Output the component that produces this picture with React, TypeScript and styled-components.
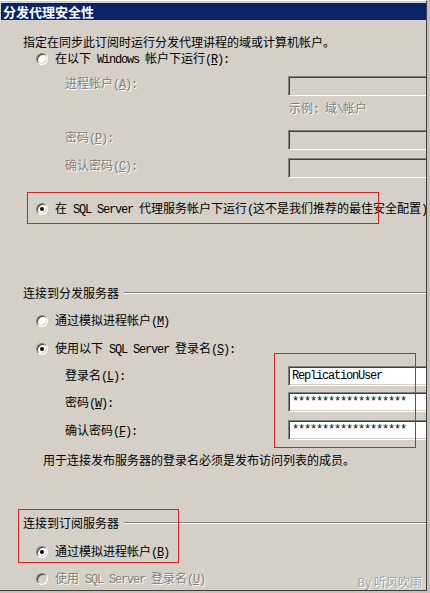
import styled, { createGlobalStyle } from 'styled-components';

const GlobalStyle = createGlobalStyle`
  html, body {
    margin: 0;
    padding: 0;
  }
  body {
    background: #c4c1ba;
    font-family: "Noto Sans CJK SC", "Noto Sans", sans-serif;
    font-size: 12px;
    color: #000;
  }
`;

const Dialog = styled.div`
  position: relative;
  width: 426px;
  height: 589px;
  background: #d4d0c8;
  border-top: 1px solid #ffffff;
  border-right: 1px solid #404040;
  border-bottom: 1px solid #404040;
  overflow: hidden;
`;

const TitleBar = styled.div`
  margin: 2px 0 0 1px;
  height: 17px;
  background: #0a246a;
  color: #fff;
  font-weight: bold;
  font-size: 13px;
  line-height: 17px;
  padding-left: 2px;
`;

const Row = styled.div<{ $mt: number; $h: number; $left: number }>`
  margin-top: ${p => p.$mt}px;
  height: ${p => p.$h}px;
  padding-left: ${p => p.$left}px;
  display: flex;
  align-items: center;
  white-space: nowrap;
  line-height: 14px;
`;

const Text = styled.span<{ $disabled?: boolean }>`
  color: ${p => (p.$disabled ? '#808080' : '#000')};
  text-shadow: ${p => (p.$disabled ? '1px 1px 0 #ffffff' : 'none')};
`;

const Mono = styled.span`
  font-family: "Liberation Mono", monospace;
  font-size: 12px;
  letter-spacing: -1.2px;
`;

const RadioDot = styled.span<{ $checked?: boolean; $disabled?: boolean }>`
  position: relative;
  box-sizing: border-box;
  width: 12px;
  height: 12px;
  margin-right: 7px;
  border-radius: 50%;
  border: 1px solid;
  border-color: #808080 #ffffff #ffffff #808080;
  box-shadow: inset 1px 1px 0 #404040, inset -1px -1px 0 #d4d0c8;
  background: ${p => (p.$disabled ? '#d4d0c8' : '#ffffff')};
  flex: none;

  &::after {
    content: '';
    display: ${p => (p.$checked ? 'block' : 'none')};
    position: absolute;
    left: 3px;
    top: 3px;
    width: 4px;
    height: 4px;
    border-radius: 50%;
    background: #000;
  }
`;

const FieldRow = styled.div<{ $mt: number; $labelTop: number }>`
  margin-top: ${p => p.$mt}px;
  height: 20px;
  display: grid;
  grid-template-columns: 223px 160px;
  padding-left: 65px;
  white-space: nowrap;

  & > span {
    padding-top: ${p => p.$labelTop}px;
    line-height: 14px;
  }
`;

const TextBox = styled.div<{ $disabled?: boolean }>`
  box-sizing: border-box;
  height: 20px;
  border: 1px solid;
  border-color: #808080 #ffffff #ffffff #808080;
  box-shadow: inset 1px 1px 0 #404040, inset -1px -1px 0 #d4d0c8;
  background: ${p => (p.$disabled ? '#d4d0c8' : '#ffffff')};
  padding: 0 3px;
  display: flex;
  align-items: center;
  font-family: "Liberation Mono", monospace;
  font-size: 12px;
  letter-spacing: -1.2px;
`;

const GroupLine = styled.div`
  flex: 1;
  height: 0;
  margin-left: 5px;
  border-top: 1px solid #808080;
  border-bottom: 1px solid #ffffff;
`;

const Callout = styled.div<{ $x: number; $y: number; $w: number; $h: number }>`
  position: absolute;
  left: ${p => p.$x}px;
  top: ${p => p.$y}px;
  width: ${p => p.$w}px;
  height: ${p => p.$h}px;
  box-sizing: border-box;
  border: 1px solid #d02626;
  pointer-events: none;
`;

const Watermark = styled.div`
  position: absolute;
  right: 4px;
  top: 574px;
  color: #a4a4a4;
  text-shadow: 1px 1px 0 #ffffff;
  font-size: 12px;
  line-height: 14px;
`;

type RadioProps = {
  mt: number;
  checked?: boolean;
  disabled?: boolean;
  children: React.ReactNode;
};

const Radio = ({ mt, checked, disabled, children }: RadioProps) => (
  <Row $mt={mt} $h={16} $left={36}>
    <RadioDot $checked={checked} $disabled={disabled} />
    <Text $disabled={disabled}>{children}</Text>
  </Row>
);

type FieldProps = {
  mt: number;
  labelTop: number;
  disabled?: boolean;
  label: React.ReactNode;
  value?: string;
};

const Field = ({ mt, labelTop, disabled, label, value }: FieldProps) => (
  <FieldRow $mt={mt} $labelTop={labelTop}>
    <Text $disabled={disabled}>{label}</Text>
    <TextBox $disabled={disabled}>{value}</TextBox>
  </FieldRow>
);

const Key = ({ k, colon }: { k: string; colon?: boolean }) => (
  <Mono>
    (<u>{k}</u>){colon ? ':' : ''}
  </Mono>
);

const stars = '*******************';

export default function App() {
  return (
    <>
      <GlobalStyle />
      <Dialog>
        <TitleBar>分发代理安全性</TitleBar>

        <Row $mt={14} $h={16} $left={23}>
          <Text>指定在同步此订阅时运行分发代理讲程的域或计算机帐户。</Text>
        </Row>
        <Radio mt={1}>
          在以下<Mono> Windows </Mono>帐户下运行<Key k="R" colon />
        </Radio>
        <Field mt={9} labelTop={0} disabled label={<>进程帐户<Key k="A" colon /></>} />
        <Row $mt={6} $h={14} $left={289}>
          <Text $disabled>
            示例<Mono>: </Mono>域<Mono>\</Mono>帐户
          </Text>
        </Row>
        <Field mt={14} labelTop={0} disabled label={<>密码<Key k="P" colon /></>} />
        <Field mt={8} labelTop={0} disabled label={<>确认密码<Key k="C" colon /></>} />
        <Radio mt={23} checked>
          在<Mono> SQL Server </Mono>代理服务帐户下运行<Mono>(</Mono>这不是我们推荐的最佳安全配置<Mono>)</Mono>
        </Radio>

        <Row $mt={68} $h={16} $left={23}>
          <Text>连接到分发服务器</Text>
          <GroupLine />
        </Row>
        <Radio mt={12}>
          通过模拟进程帐户<Key k="M" />
        </Radio>
        <Radio mt={12} checked>
          使用以下<Mono> SQL Server </Mono>登录名<Key k="S" colon />
        </Radio>
        <Field mt={9} labelTop={2} label={<>登录名<Key k="L" colon /></>} value="ReplicationUser" />
        <Field mt={6} labelTop={3} label={<>密码<Key k="W" colon /></>} value={stars} />
        <Field mt={8} labelTop={3} label={<>确认密码<Key k="F" colon /></>} value={stars} />
        <Row $mt={13} $h={14} $left={43}>
          <Text>用于连接发布服务器的登录名必须是发布访问列表的成员。</Text>
        </Row>

        <Row $mt={48} $h={16} $left={23}>
          <Text>连接到订阅服务器</Text>
          <GroupLine />
        </Row>
        <Radio mt={13} checked>
          通过模拟进程帐户<Key k="B" />
        </Radio>
        <Radio mt={11} disabled>
          使用<Mono> SQL Server </Mono>登录名<Key k="U" />
        </Radio>

        <Callout $x={27} $y={191} $w={352} $h={32} />
        <Callout $x={274} $y={352} $w={142} $h={95} />
        <Callout $x={18} $y={508} $w={161} $h={54} />

        <Watermark>By 听风吹雨</Watermark>
      </Dialog>
    </>
  );
}
